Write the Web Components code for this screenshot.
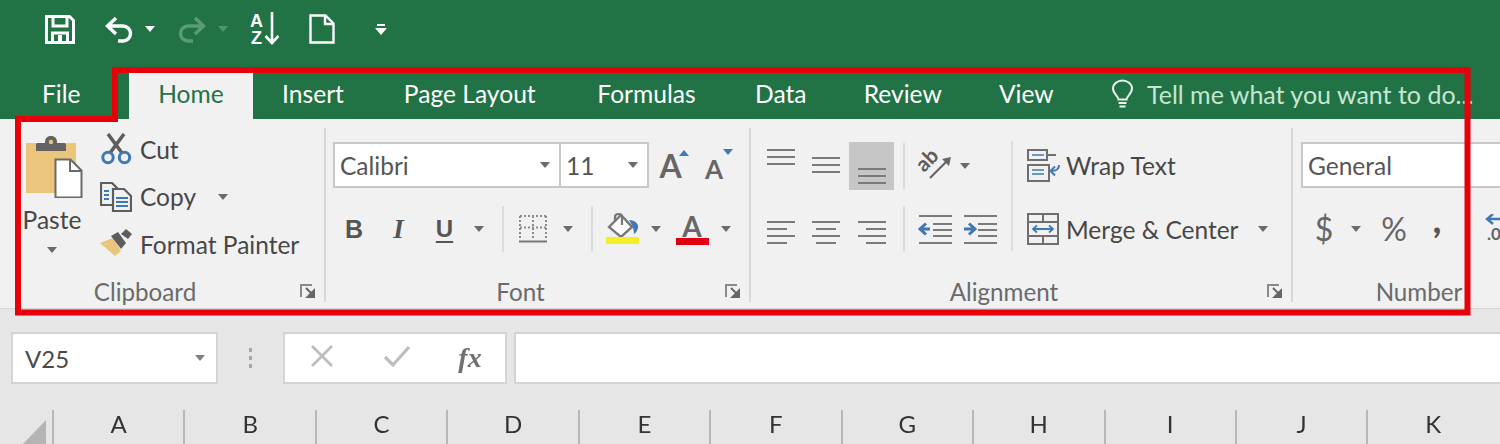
<!DOCTYPE html>
<html lang="en">
<head>
<meta charset="utf-8">
<title>Excel ribbon</title>
<style>
	html, body { margin: 0; height: 444px; overflow: hidden; background: #e6e6e6; }
	body { font-family: Lato, "Noto Sans", sans-serif; color: #444; position: relative; width: 1500px; }
	.soft { filter: blur(0.55px); }
</style>
</head>
<body>
<div class="soft">
	<xl-qat></xl-qat>
	<xl-tabs>
		<xl-tab file>File</xl-tab>
		<xl-tab active>Home</xl-tab>
		<xl-tab style="--w: 120px">Insert</xl-tab>
		<xl-tab style="--w: 193.5px">Page Layout</xl-tab>
		<xl-tab style="--w: 160px">Formulas</xl-tab>
		<xl-tab style="--w: 108.5px">Data</xl-tab>
		<xl-tab style="--w: 135.5px">Review</xl-tab>
		<xl-tab style="--w: 111.5px">View</xl-tab>
		<xl-tell>Tell me what you want to do...</xl-tell>
	</xl-tabs>

	<xl-ribbon>
		<!-- Clipboard -->
		<xl-group label="Clipboard" style="--w: 324px">
			<xl-clipboard>
				<xl-paste></xl-paste>
				<xl-small icon="cut">Cut</xl-small>
				<xl-small icon="copy">Copy<xl-caret style="margin-left: 14px"></xl-caret></xl-small>
				<xl-small icon="painter">Format Painter</xl-small>
			</xl-clipboard>
		</xl-group>

		<!-- Font -->
		<xl-group label="Font" style="--w: 423px; --pad: 7px">
			<xl-rows>
				<xl-row style="--cols: 228px 88px 50px 40px">
					<xl-select style="--sel-w: 228px" value="Calibri"></xl-select>
					<xl-select style="--sel-w: 88px" value="11" joined></xl-select>
					<xl-fontsize dir="up"></xl-fontsize>
					<xl-fontsize dir="down"></xl-fontsize>
				</xl-row>
				<xl-row style="--cols: 42px 47px 45px 24px 24px 36px 34px 14px 48px 18px 54px 14px">
					<xl-glyph kind="b">B</xl-glyph>
					<xl-glyph kind="i">I</xl-glyph>
					<xl-glyph kind="u">U</xl-glyph>
					<xl-caret></xl-caret>
					<xl-sep></xl-sep>
					<xl-icon name="borders"></xl-icon>
					<xl-caret></xl-caret>
					<xl-sep></xl-sep>
					<xl-icon name="fill"></xl-icon>
					<xl-caret></xl-caret>
					<xl-fontcolor></xl-fontcolor>
					<xl-caret></xl-caret>
				</xl-row>
			</xl-rows>
		</xl-group>

		<!-- Alignment -->
		<xl-group label="Alignment" style="--w: 540px; --pad: 8px">
			<xl-split>
				<xl-rows>
					<xl-row style="--cols: 44px 46px 45px 20px 42px 18px 32px">
						<xl-icon name="alignTop"></xl-icon>
						<xl-icon name="alignMid"></xl-icon>
						<xl-selected><xl-icon name="alignBottom"></xl-icon></xl-selected>
						<xl-sep></xl-sep>
						<xl-icon name="orient"></xl-icon>
						<xl-caret></xl-caret>
					</xl-row>
					<xl-row style="--cols: 44px 46px 45px 20px 42px 48px 2px">
						<xl-icon name="alignLeft"></xl-icon>
						<xl-icon name="alignCenter"></xl-icon>
						<xl-icon name="alignRight"></xl-icon>
						<xl-sep></xl-sep>
						<xl-icon name="outdent"></xl-icon>
						<xl-icon name="indent"></xl-icon>
					</xl-row>
				</xl-rows>
				<xl-sep tall></xl-sep>
				<xl-rows>
					<xl-wide icon="wrap">Wrap Text</xl-wide>
					<xl-wide icon="merge">Merge &amp; Center<xl-caret style="margin-left: 19px"></xl-caret></xl-wide>
				</xl-rows>
			</xl-split>
		</xl-group>

		<!-- Number, runs off the right edge -->
		<xl-group label="Number" style="--w: 286px; --pad: 8px" nosep>
			<xl-rows>
				<xl-row style="--cols: 280px">
					<xl-select style="--sel-w: 280px" value="General" nocaret></xl-select>
				</xl-row>
				<xl-row style="--cols: 46px 18px 58px 28px 29px 40px">
					<xl-glyph kind="n">$</xl-glyph>
					<xl-caret></xl-caret>
					<xl-glyph kind="n">%</xl-glyph>
					<xl-glyph kind="comma">,</xl-glyph>
					<span></span>
					<xl-icon name="decimal"></xl-icon>
				</xl-row>
			</xl-rows>
		</xl-group>
	</xl-ribbon>

	<xl-formula-bar name="V25"></xl-formula-bar>
	<xl-columns></xl-columns>
</div>
<xl-highlight></xl-highlight>

<script>
// Icons, keyed by name. Every one is drawn to its real pixel size.
const B = '#3f79b5';
const lines = (rows, c = '#7a7a7a') => rows.map(([x1, x2, y]) =>
	`<path d="M${x1} ${y}H${x2}" stroke="${c}" stroke-width="2"/>`).join('');

const ICONS = {
	save: [30, 29, `<g fill="none" stroke="#fff" stroke-width="3"><path d="M1.5 1.5h23l4 4v22h-27z"/><path d="M8 2v9h14V2"/><path d="M7.5 27v-9h15v9"/></g><path d="M13 20h4v7h-4z" fill="#fff"/>`],
	undo: [31, 29, `<path d="M12 3 3.5 11l8.500 8M4 11h15a7.500 7.500 0 0 1 0 15h-5" fill="none" stroke="#fff" stroke-width="3.4"/>`],
	redo: [31, 29, `<path d="M19 3l8.500 8-8.500 8M27 11H12a7.500 7.500 0 0 0 0 15h5" fill="none" stroke="#5a9c78" stroke-width="3.400"/>`],
	az: [29, 38, `<text x="0" y="15" font-family="Liberation Sans" font-weight="700" font-size="18" fill="#fff">A</text><text x="1" y="32" font-family="Liberation Sans" font-weight="700" font-size="18" fill="#fff">Z</text><path d="M22 0v30M15.500 24l6.500 7 6.500-7" fill="none" stroke="#fff" stroke-width="2.600"/>`],
	page: [26, 30, `<path d="M1.500 1.500h15l8 8v19h-23zM16 2v8h8" fill="none" stroke="#fff" stroke-width="2.400"/>`],
	custom: [12, 12, `<path d="M2 1h8v2H2z" fill="#fff"/><path d="M0 5h12l-6 7z" fill="#fff"/>`],
	bulb: [24, 30, `<path d="M7.500 20.500c0-3.500-5.500-5.500-5.500-11C2 5 6.500 1.500 11.500 1.500S21 5 21 9.500c0 5.500-5.500 7.500-5.500 11zM7.500 24h8M8.500 27.500h6" fill="none" stroke="#eaf4ee" stroke-width="2"/>`],
	launcher: [15, 14, `<path d="M1 13V1h11" fill="none" stroke="#8a8a8a" stroke-width="2"/><path d="M6 4l6.500 6.500M14.500 6v8h-8z" stroke="#666" stroke-width="2" fill="#666"/>`],
	paste: [58, 62, `<rect x="1" y="7" width="50" height="50" fill="#eac57b"/><path d="M11 9c0-1.500 1-2 2-2h7c0-5 2-7 6-7s6 2 6 7h7c1 0 2 .5 2 2v6H11z" fill="#636363"/><circle cx="26" cy="6" r="2.200" fill="#eac57b"/><path d="M30.500 23.500h15l11 11v27h-26z" fill="#fff" stroke="#6a6a6a" stroke-width="2"/><path d="M45 24v11h11" fill="none" stroke="#6a6a6a" stroke-width="2"/>`],
	cut: [31, 32, `<path d="M9 20 23 1M21 20 7 1" stroke="#5d5d5d" stroke-width="3.600" fill="none"/><g fill="none" stroke="${B}" stroke-width="3"><circle cx="7" cy="24.500" r="5.200"/><circle cx="23.500" cy="24.500" r="5.200"/></g>`],
	copy: [32, 30, `<g fill="#f1f1f1" stroke="#5d5d5d" stroke-width="2.200"><path d="M1 1h11l5 5v17H1z"/><path d="M13 7h11l7 7v15H13z"/></g><path d="M4 9h5M4 13h5M4 17h5" stroke="${B}" stroke-width="1.800"/><path d="M16 16h12M16 20h12M16 24h12" stroke="${B}" stroke-width="1.800"/>`],
	painter: [32, 30, `<path d="M0 14 13 9l8 13-6 5z" fill="#eac57b"/><path d="M11 7l7-4 8 11-5 6z" fill="#5d5d5d"/><path d="M21 5l5-5 6 5-4 5z" fill="#5d5d5d"/>`],
	borders: [28, 28, `<g fill="none" stroke="#8c8c8c" stroke-width="2" stroke-dasharray="2 2"><path d="M1 1h26M1 12.500h26M1 1v24M14 1v24M27 1v24"/></g><path d="M0 26.500h28" stroke="#777" stroke-width="2"/>`],
	fill: [36, 34, `<path d="M24 8c6 0 10 4 9 8-1 3-2 5-4 6 0-4-1-8-5-14z" fill="${B}"/><path d="M4 15 16 3l11 12-11 10z" fill="#fff" stroke="#777" stroke-width="2.400"/><path d="M10 10V5c0-4 7-4 7 0v8" fill="none" stroke="#777" stroke-width="2.200"/><rect x="1" y="25" width="33" height="7" fill="#f4ee25"/>`],
	alignTop: [30, 46, lines([[1, 29, 7], [1, 29, 14], [1, 29, 21]])],
	alignMid: [30, 46, lines([[1, 29, 15], [1, 29, 22], [1, 29, 29]])],
	alignBottom: [30, 46, lines([[1, 29, 26], [1, 29, 33], [1, 29, 40]])],
	alignLeft: [30, 46, lines([[1, 29, 16], [1, 21, 23], [1, 29, 30], [1, 21, 37]])],
	alignCenter: [30, 46, lines([[1, 29, 16], [5, 25, 23], [1, 29, 30], [5, 25, 37]])],
	alignRight: [30, 46, lines([[1, 29, 16], [9, 29, 23], [1, 29, 30], [9, 29, 37]])],
	orient: [46, 46, `<g transform="translate(5 5)"><text transform="translate(7 25) rotate(-45)" font-family="Lato" font-weight="700" font-size="21" fill="#5d5d5d">ab</text><path d="M13 30 31 12" fill="none" stroke="#666" stroke-width="2.200"/><path d="M34 9l-9 2 7 7z" fill="#666"/></g>`],
	outdent: [35, 30, `${lines([[1, 34, 2], [15, 34, 10], [15, 34, 16], [15, 34, 22], [1, 34, 29]])}<path d="M12 15H3M8 9.500 2 15l6 5.500" fill="none" stroke="${B}" stroke-width="3"/>`],
	indent: [35, 30, `${lines([[1, 34, 2], [15, 34, 10], [15, 34, 16], [15, 34, 22], [1, 34, 29]])}<path d="M1 15h10M6 9.500 12 15l-6 5.500" fill="none" stroke="${B}" stroke-width="3"/>`],
	wrap: [33, 33, `<g fill="none" stroke="#6f6f6f" stroke-width="2"><path d="M1 1h19v10H1z"/><path d="M20 6h9"/><path d="M1 16h21v16H1z"/></g><path d="M5 6h12" stroke="${B}" stroke-width="1.500"/><path d="M5 21h12M5 25h12" stroke="${B}" stroke-width="1.500"/><path d="M32 16c0 5-3 6-8 6M28 17.500 23.500 22l4.500 4.500" fill="none" stroke="${B}" stroke-width="2"/>`],
	merge: [32, 32, `<g fill="none" stroke="#6f6f6f" stroke-width="2"><rect x="1" y="1" width="30" height="30"/><path d="M1 9h30M1 23h30M16 1v8M16 23v8"/></g><path d="M6 16h20M10 12.500 6 16l4 3.500M22 12.500l4 3.500-4 3.500" fill="none" stroke="${B}" stroke-width="1.800"/>`],
	decimal: [30, 30, `<path d="M16 5H3M8 0 2 5l6 5" fill="none" stroke="${B}" stroke-width="2.400"/><text x="2" y="26" font-family="Lato" font-weight="700" font-size="17" fill="#666">.0</text>`],
};

// Base class, so each element only states its styles and markup
class ShadowElement extends HTMLElement {
	constructor() {
		super();
		this.attachShadow({ mode: 'open' });
	}

	connectedCallback() {
		this.shadowRoot.innerHTML = `<style>${this.styles()}</style>${this.markup()}`;
	}

	styles() { return ''; }
	markup() { return '<slot></slot>'; }
}

class XlIcon extends ShadowElement {
	styles() { return ':host { display: inline-flex; line-height: 0; } svg { display: block; }'; }
	markup() {
		const [w, h, body] = ICONS[this.getAttribute('name')];
		return `<svg xmlns="http://www.w3.org/2000/svg" width="${w}" height="${h}" viewBox="0 0 ${w} ${h}">${body}</svg>`;
	}
}

class XlCaret extends ShadowElement {
	styles() {
		return `:host { display: inline-block; width: 0; height: 0;
			border-left: 5.5px solid transparent; border-right: 5.5px solid transparent;
			border-top: 6px solid var(--caret, #6a6a6a); }`;
	}
	markup() { return ''; }
}

class XlQat extends ShadowElement {
	styles() {
		return `:host { display: grid; height: 73px; box-sizing: border-box; background: #217346;
				padding: 0 0 15px 45px; align-items: center; justify-items: start;
				grid-template-columns: 59px 41px 31px 42px 32px 59px 66px 12px; --caret: #fff; }
			.off { --caret: #4f9570; }
			.az { margin-top: 4px; }`;
	}
	markup() {
		return `<xl-icon name="save"></xl-icon><xl-icon name="undo"></xl-icon><xl-caret></xl-caret>
			<xl-icon name="redo"></xl-icon><xl-caret class="off"></xl-caret><xl-icon class="az" name="az"></xl-icon>
			<xl-icon name="page"></xl-icon><xl-icon name="custom"></xl-icon>`;
	}
}

class XlTabs extends ShadowElement {
	styles() { return ':host { display: flex; height: 46px; background: #217346; font-size: 24.6px; }'; }
}

class XlTab extends ShadowElement {
	styles() {
		return `:host { display: flex; align-items: center; justify-content: center; width: var(--w); padding-bottom: 5px; color: #fff; box-sizing: border-box; }
			:host([active]) { background: #f1f1f1; color: #217346; width: 124px; }
			:host([file]) { width: 129px; padding-left: 42px; justify-content: flex-start; }`;
	}
}

class XlTell extends ShadowElement {
	styles() {
		return `:host { display: flex; align-items: center; gap: 12px; padding: 0 0 5px 29px; color: #c6e5d2; white-space: nowrap; font-size: 25px; }`;
	}
	markup() { return '<xl-icon name="bulb"></xl-icon><slot></slot>'; }
}

class XlRibbon extends ShadowElement {
	styles() {
		return `:host { display: flex; height: 190px; box-sizing: border-box; padding-top: 9px; background: #f1f1f1;
			border-bottom: 1px solid #d6d6d6; overflow: hidden; font-size: 24.5px; color: #474747; }`;
	}
}

class XlGroup extends ShadowElement {
	styles() {
		return `:host { display: flex; flex: none; flex-direction: column; width: var(--w); height: 174px;
				border-right: 2px solid #d8d8d8; }
			:host([nosep]) { border-right: 0; }
			.body { flex: 1; padding-left: var(--pad, 0); min-height: 0; }
			.foot { display: flex; align-items: center; height: 26px; margin-bottom: -2px; color: #6a6a6a; font-size: 24.2px; }
			.label { flex: 1; text-align: center; }
			.launch { width: 34px; box-sizing: border-box; padding-left: 10px; display: flex; }`;
	}
	markup() {
		const launch = this.hasAttribute('nosep') ? '' : '<xl-icon name="launcher"></xl-icon>';
		return `<div class="body"><slot></slot></div>
			<div class="foot"><span class="label">${this.getAttribute('label')}</span><span class="launch">${launch}</span></div>`;
	}
}

class XlClipboard extends ShadowElement {
	styles() {
		return `:host { display: grid; grid-template-columns: 100px 1fr; grid-auto-rows: 42px; row-gap: 5.5px; white-space: nowrap; }
			::slotted(xl-paste) { grid-row: span 3; }`;
	}
}

class XlPaste extends ShadowElement {
	styles() {
		return `:host { display: flex; flex-direction: column; align-items: center; width: 104px; padding-top: 8px; box-sizing: border-box; }
			.icon { margin-left: 3px; }
			.name { line-height: 30px; margin-top: 7px; }
			xl-caret { margin-top: 12px; }`;
	}
	markup() {
		return '<xl-icon class="icon" name="paste"></xl-icon><span class="name">Paste</span><xl-caret></xl-caret>';
	}
}

class XlSmall extends ShadowElement {
	styles() {
		return `:host { display: flex; align-items: center; gap: 8px; }
			.i { width: 32px; display: flex; justify-content: center; }`;
	}
	markup() {
		return `<span class="i"><xl-icon name="${this.getAttribute('icon')}"></xl-icon></span><slot></slot>`;
	}
}

class XlRows extends ShadowElement {
	styles() { return ':host { display: flex; flex-direction: column; gap: 18px; padding-top: 14px; }'; }
}

class XlRow extends ShadowElement {
	styles() {
		return `:host { display: grid; grid-template-columns: var(--cols); height: 46px; align-items: center; justify-items: center; }`;
	}
}

class XlSplit extends ShadowElement {
	styles() { return ':host { display: flex; align-items: flex-start; }'; }
}

class XlSep extends ShadowElement {
	styles() {
		return `:host { display: block; width: 2px; height: 46px; background: #dcdcdc; }
			:host([tall]) { height: 110px; margin: 13px 14px 0 5px; align-self: flex-start; }`;
	}
	markup() { return ''; }
}

class XlSelected extends ShadowElement {
	styles() { return ':host { display: flex; justify-content: center; width: 45px; height: 48px; align-items: center; background: #c6c6c6; }'; }
}

class XlSelect extends ShadowElement {
	styles() {
		return `:host { display: flex; align-items: center; box-sizing: border-box; width: var(--sel-w); height: 46px;
				background: #fff; border: 2px solid #c8c8c8; padding: 0 9px 0 5px; color: #555; }
			:host([joined]) { border-left: 0; }
			.v { flex: 1; }`;
	}
	markup() {
		const caret = this.hasAttribute('nocaret') ? '' : '<xl-caret></xl-caret>';
		return `<span class="v">${this.getAttribute('value')}</span>${caret}`;
	}
}

// Grow / shrink font, a letter with a small blue triangle at its shoulder
class XlFontsize extends ShadowElement {
	styles() {
		const up = this.getAttribute('dir') === 'up';
		return `:host { display: flex; align-items: flex-end; height: 46px; box-sizing: border-box; padding-bottom: 6px;
				font-weight: 700; color: #666; font-size: ${up ? 32 : 26}px; line-height: 1; }
			i { display: block; align-self: flex-start; margin: ${up ? 8 : 7}px 0 0 ${up ? -3 : 0}px; width: 0; height: 0;
				border-left: 5.5px solid transparent; border-right: 5.5px solid transparent;
				${up ? 'border-bottom' : 'border-top'}: 6px solid ${B}; }`;
	}
	markup() { return '<span>A</span><i></i>'; }
}

class XlGlyph extends ShadowElement {
	styles() {
		return `:host { display: block; color: #555; line-height: 1; }
			:host([kind="b"]) { font: 700 25px "Liberation Sans", sans-serif; }
			:host([kind="i"]) { font: italic 700 27px "Liberation Serif", serif; color: #555; }
			:host([kind="u"]) { font: 700 24px "Liberation Sans", sans-serif; text-decoration: underline; text-underline-offset: 4px; text-decoration-thickness: 2px; }
			:host([kind="n"]) { font-size: 32px; color: #666; }
			:host([kind="comma"]) { font-size: 36px; font-weight: 900; color: #555; transform: translateY(-10px); }`;
	}
}

class XlFontcolor extends ShadowElement {
	styles() {
		return `:host { display: flex; flex-direction: column; align-items: center; width: 33px; }
			span { font-weight: 700; font-size: 28px; line-height: 24px; color: #666; }
			i { display: block; width: 33px; height: 7px; background: #e0000f; }`;
	}
	markup() { return '<span>A</span><i></i>'; }
}

class XlWide extends ShadowElement {
	styles() {
		return `:host { display: flex; align-items: center; height: 46px; white-space: nowrap; }
			.i { width: 39px; flex: none; display: flex; }`;
	}
	markup() {
		return `<span class="i"><xl-icon name="${this.getAttribute('icon')}"></xl-icon></span><slot></slot>`;
	}
}

class XlFormulaBar extends ShadowElement {
	styles() {
		return `:host { display: flex; align-items: stretch; height: 52px; margin-top: 23px; padding-left: 11px;
				font-size: 24px; color: #4a4a4a; }
			.box { display: flex; align-items: center; box-sizing: border-box; background: #fff; border: 2px solid #d4d4d4; }
			.name { width: 207px; padding: 0 11px 0 12px; justify-content: space-between; }
			.dots { width: 65px; display: flex; justify-content: center; align-items: center; }
			.dots i { display: grid; gap: 4px; }
			.dots b { display: block; width: 3px; height: 4px; background: #a6a6a6; }
			.cmds { width: 224px; }
			.cmds span { text-align: center; flex: none; }
			.x { width: 74px; } .c { width: 76px; } .f { width: 70px; font: italic 700 28px "Liberation Serif", serif; color: #707070; }
			.fill { flex: 1; margin-left: 7px; margin-right: -4px; }`;
	}
	markup() {
		return `<div class="box name"><span>${this.getAttribute('name')}</span><xl-caret style="--caret:#808080"></xl-caret></div>
			<div class="dots"><i><b></b><b></b><b></b></i></div>
			<div class="box cmds">
				<span class="x"><svg width="24" height="24" viewBox="0 0 24 24"><path d="M2 2l20 20M22 2 2 22" stroke="#bdbdbd" stroke-width="2.800" fill="none"/></svg></span>
				<span class="c"><svg width="28" height="24" viewBox="0 0 28 24"><path d="M2 13l8 8L26 3" stroke="#bdbdbd" stroke-width="3.200" fill="none"/></svg></span>
				<span class="f">fx</span>
			</div>
			<div class="box fill"></div>`;
	}
}

class XlColumns extends ShadowElement {
	styles() {
		return `:host { display: grid; grid-template-columns: 52px repeat(11, 131.45px); height: 60px; padding-top: 26px;
				box-sizing: border-box; font-size: 24px; color: #333; align-items: stretch; }
			.corner { position: relative; }
			.corner::after { content: ""; position: absolute; right: 6px; bottom: -2px; width: 25px; height: 26px;
				background: #b4b4b4; clip-path: polygon(100% 0, 100% 100%, 0 100%); }
			span { display: flex; justify-content: center; align-items: center; height: 34px;
				border-left: 2px solid #b8b8b8; padding-bottom: 8px; box-sizing: border-box; }`;
	}
	markup() {
		const letters = 'ABCDEFGHIJK'.split('').map((c) => `<span>${c}</span>`).join('');
		return `<div class="corner"></div>${letters}`;
	}
}

// The red marker somebody drew on the screenshot, lies over everything
class XlHighlight extends ShadowElement {
	styles() { return ':host { position: absolute; left: 0; top: 0; width: 1500px; height: 444px; pointer-events: none; } svg { display: block; }'; }
	markup() {
		return `<svg width="1500" height="444" viewBox="0 0 1500 444"><path d="M115 119V70H1467.500V312.500H18V119z" fill="none" stroke="#e6000a" stroke-width="6"/></svg>`;
	}
}

customElements.define('xl-icon', XlIcon);
customElements.define('xl-caret', XlCaret);
customElements.define('xl-qat', XlQat);
customElements.define('xl-tabs', XlTabs);
customElements.define('xl-tab', XlTab);
customElements.define('xl-tell', XlTell);
customElements.define('xl-ribbon', XlRibbon);
customElements.define('xl-group', XlGroup);
customElements.define('xl-clipboard', XlClipboard);
customElements.define('xl-paste', XlPaste);
customElements.define('xl-small', XlSmall);
customElements.define('xl-rows', XlRows);
customElements.define('xl-row', XlRow);
customElements.define('xl-split', XlSplit);
customElements.define('xl-sep', XlSep);
customElements.define('xl-selected', XlSelected);
customElements.define('xl-select', XlSelect);
customElements.define('xl-fontsize', XlFontsize);
customElements.define('xl-glyph', XlGlyph);
customElements.define('xl-fontcolor', XlFontcolor);
customElements.define('xl-wide', XlWide);
customElements.define('xl-formula-bar', XlFormulaBar);
customElements.define('xl-columns', XlColumns);
customElements.define('xl-highlight', XlHighlight);
</script>
</body>
</html>
